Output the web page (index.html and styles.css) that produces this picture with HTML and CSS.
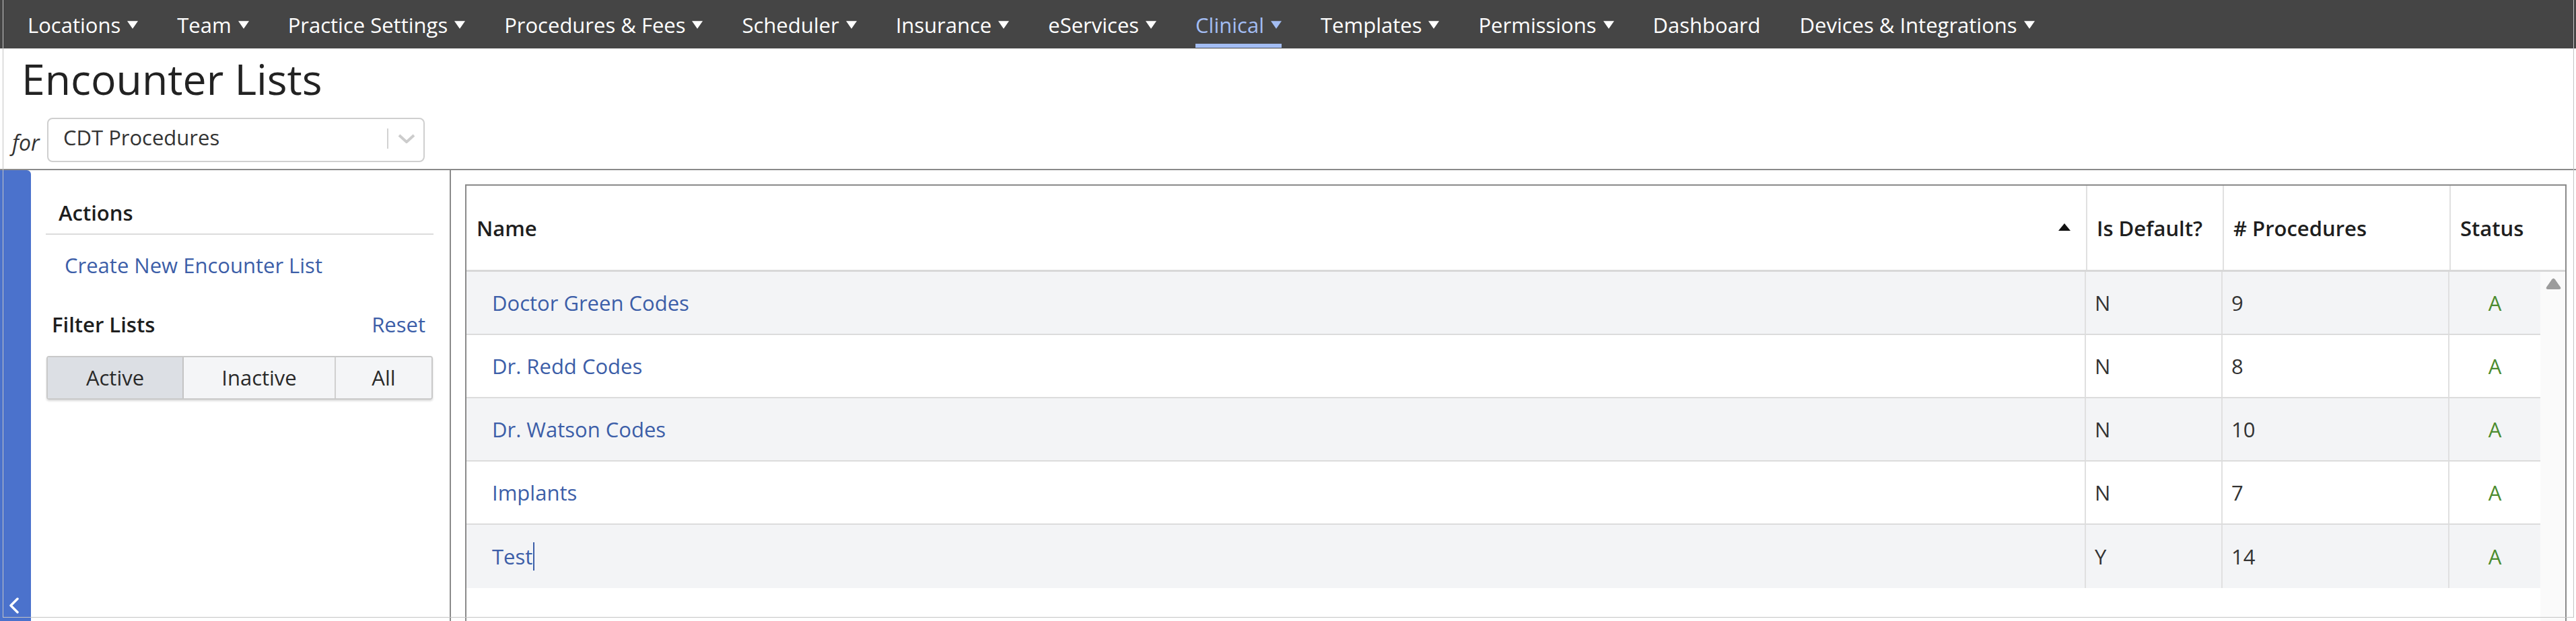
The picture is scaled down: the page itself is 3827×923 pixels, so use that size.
FILE: index.html
```html
<!DOCTYPE html>
<html lang="en">
<head>
    <meta charset="UTF-8">
    <meta name="viewport" content="width=device-width, initial-scale=1.0">
    <title>Encounter Lists</title>
    <link rel="stylesheet" href="styles.css">
</head>
<body>
    <div class="frame"></div>

    <nav class="topnav">
        <a class="nav-item">Locations <svg class="caret" viewBox="0 0 15 11"><polygon points="0,0 15,0 7.5,11"/></svg></a>
        <a class="nav-item">Team <svg class="caret" viewBox="0 0 15 11"><polygon points="0,0 15,0 7.5,11"/></svg></a>
        <a class="nav-item">Practice Settings <svg class="caret" viewBox="0 0 15 11"><polygon points="0,0 15,0 7.5,11"/></svg></a>
        <a class="nav-item">Procedures &amp; Fees <svg class="caret" viewBox="0 0 15 11"><polygon points="0,0 15,0 7.5,11"/></svg></a>
        <a class="nav-item">Scheduler <svg class="caret" viewBox="0 0 15 11"><polygon points="0,0 15,0 7.5,11"/></svg></a>
        <a class="nav-item">Insurance <svg class="caret" viewBox="0 0 15 11"><polygon points="0,0 15,0 7.5,11"/></svg></a>
        <a class="nav-item">eServices <svg class="caret" viewBox="0 0 15 11"><polygon points="0,0 15,0 7.5,11"/></svg></a>
        <a class="nav-item active">Clinical <svg class="caret" viewBox="0 0 15 11"><polygon points="0,0 15,0 7.5,11"/></svg></a>
        <a class="nav-item">Templates <svg class="caret" viewBox="0 0 15 11"><polygon points="0,0 15,0 7.5,11"/></svg></a>
        <a class="nav-item">Permissions <svg class="caret" viewBox="0 0 15 11"><polygon points="0,0 15,0 7.5,11"/></svg></a>
        <a class="nav-item">Dashboard</a>
        <a class="nav-item">Devices &amp; Integrations <svg class="caret" viewBox="0 0 15 11"><polygon points="0,0 15,0 7.5,11"/></svg></a>
    </nav>

    <header class="page-head">
        <h1>Encounter Lists</h1>
        <div class="for-row">
            <span class="for-label">for</span>
            <div class="select">
                <span class="select-value">CDT Procedures</span>
                <span class="select-sep"></span>
                <svg class="select-chevron" viewBox="0 0 26 14"><polyline points="2,2 13,12 24,2"/></svg>
            </div>
        </div>
    </header>

    <main class="workspace">
        <aside class="rail">
            <svg class="rail-toggle" viewBox="0 0 16 24"><polyline points="13,2 3,12 13,22"/></svg>
        </aside>

        <section class="side-panel">
            <div class="panel-title">Actions</div>
            <a class="panel-link">Create New Encounter List</a>

            <div class="filter-head">
                <span class="filter-title">Filter Lists</span>
                <a class="reset">Reset</a>
            </div>
            <div class="btn-group">
                <span class="btn btn-active">Active</span>
                <span class="btn btn-inactive">Inactive</span>
                <span class="btn btn-all">All</span>
            </div>
        </section>

        <section class="list-area">
            <div class="grid">
                <div class="grid-head">
                    <div class="hcell hcell-name">
                        <span>Name</span>
                        <svg class="sort-up" viewBox="0 0 18 11"><polygon points="9,0 18,11 0,11"/></svg>
                    </div>
                    <div class="hcell">Is Default?</div>
                    <div class="hcell"># Procedures</div>
                    <div class="hcell">Status</div>
                </div>
                <div class="grid-body">
                    <div class="rows">
                        <div class="row">
                            <div class="cell cell-name"><a>Doctor Green Codes</a></div>
                            <div class="cell">N</div>
                            <div class="cell">9</div>
                            <div class="cell cell-status">A</div>
                        </div>
                        <div class="row">
                            <div class="cell cell-name"><a>Dr. Redd Codes</a></div>
                            <div class="cell">N</div>
                            <div class="cell">8</div>
                            <div class="cell cell-status">A</div>
                        </div>
                        <div class="row">
                            <div class="cell cell-name"><a>Dr. Watson Codes</a></div>
                            <div class="cell">N</div>
                            <div class="cell">10</div>
                            <div class="cell cell-status">A</div>
                        </div>
                        <div class="row">
                            <div class="cell cell-name"><a>Implants</a></div>
                            <div class="cell">N</div>
                            <div class="cell">7</div>
                            <div class="cell cell-status">A</div>
                        </div>
                        <div class="row">
                            <div class="cell cell-name"><a>Test</a><span class="text-caret"></span></div>
                            <div class="cell">Y</div>
                            <div class="cell">14</div>
                            <div class="cell cell-status">A</div>
                        </div>
                    </div>
                    <div class="scrollbar">
                        <svg class="scroll-up" viewBox="0 0 23 17"><path d="M9.2 2.2 Q11.5 -0.8 13.8 2.2 L22 14 Q23 17 20 17 L3 17 Q0 17 1 14 Z"/></svg>
                    </div>
                </div>
            </div>
        </section>
    </main>
</body>
</html>
```

FILE: styles.css
```css
html, body { margin: 0; padding: 0; }
body {
    font-family: "Open Sans", "Liberation Sans", sans-serif;
    font-size: 31px;
    color: #333;
    background: #fff;
    width: 3827px;
    height: 923px;
    overflow: hidden;
    display: flex;
    flex-direction: column;
}
a { color: #3c5ea8; text-decoration: none; }

/* thin window outline drawn over everything */
.frame {
    position: fixed;
    left: 4px;
    top: -2px;
    width: 3820px;
    height: 920px;
    box-sizing: border-box;
    border: 1.5px solid #c4c4c4;
    pointer-events: none;
    z-index: 10;
}

/* top navigation */
.topnav {
    height: 72px;
    flex: none;
    background: #454545;
    display: flex;
    align-items: center;
    gap: 58px;
    padding: 2px 0 0 41px;
    box-sizing: border-box;
}
.nav-item {
    position: relative;
    color: #fff;
    font-size: 31px;
    line-height: 42px;
    display: flex;
    align-items: center;
    white-space: nowrap;
}
.caret { width: 16px; height: 12px; margin-left: 10px; fill: currentColor; }
.nav-item.active { color: #a3bdf3; }
.nav-item.active::after {
    content: "";
    position: absolute;
    left: 0;
    right: 0;
    bottom: -13px;
    height: 6px;
    background: #a3bdf3;
}

/* page heading */
.page-head {
    flex: none;
    padding: 3px 0 10px 0;
    border-bottom: 2px solid #8a8a8a;
}
h1 {
    margin: 0;
    padding-left: 32px;
    font-size: 62.5px;
    font-weight: 400;
    line-height: 84px;
    color: #222;
}
.for-row {
    display: flex;
    align-items: center;
    margin-top: 16px;
    padding-left: 18px;
}
.for-label { font-style: italic; font-size: 32px; color: #333; width: 52px; padding-top: 6px; }
.select {
    width: 561px;
    height: 66px;
    box-sizing: border-box;
    border: 2px solid #cfcfcf;
    border-radius: 8px;
    display: flex;
    align-items: center;
    padding: 0 12px 0 22px;
}
.select-value { flex: 1; color: #333; padding-bottom: 8px; }
.select-sep { width: 2px; height: 30px; background: #d2d2d2; margin-bottom: 4px; }
.select-chevron {
    width: 26px; height: 14px; margin-left: 14px; margin-bottom: 4px;
    fill: none; stroke: #cccccc; stroke-width: 4;
}

/* main workspace */
.workspace { flex: 1; display: flex; min-height: 0; }
.rail {
    width: 46px;
    flex: none;
    background: #4b72cc;
    border-top-right-radius: 6px;
    display: flex;
    align-items: flex-end;
}
.rail-toggle {
    width: 16px; height: 24px; margin: 0 0 11px 13px;
    fill: none; stroke: #fff; stroke-width: 3.5; stroke-linecap: round; stroke-linejoin: round;
}

.side-panel {
    width: 624px;
    flex: none;
    box-sizing: border-box;
    padding: 0 24px 0 22px;
    border-right: 2px solid #8a8a8a;
    display: flex;
    flex-direction: column;
}
.panel-title {
    margin-top: 42px;
    padding: 0 0 10px 19px;
    font-weight: 600;
    color: #1e1e1e;
    line-height: 42px;
    border-bottom: 2px solid #dcdcdc;
}
.panel-link { margin-top: 24px; padding-left: 28px; line-height: 42px; }
.filter-head {
    margin-top: 46px;
    display: flex;
    justify-content: space-between;
    padding: 0 12px 0 9px;
    line-height: 42px;
}
.filter-title { font-weight: 600; color: #1e1e1e; }
.btn-group {
    margin: 26px 1px 0 1px;
    height: 65px;
    display: flex;
    border: 2px solid #c9c9c9;
    border-radius: 4px;
    box-shadow: 0 2px 3px rgba(0,0,0,0.15);
    box-sizing: border-box;
    overflow: hidden;
}
.btn {
    display: flex;
    align-items: center;
    justify-content: center;
    background: #f4f5f7;
    color: #2a2a2a;
    padding-bottom: 2px;
}
.btn-active { width: 200px; background: #dcdfe4; border-right: 2px solid #c4c4c4; }
.btn-inactive { width: 224px; border-right: 2px solid #d0d0d0; }
.btn-all { flex: 1; }

/* encounter list grid */
.list-area {
    flex: 1;
    padding: 21px 14px 0 21px;
    display: flex;
    min-width: 0;
}
.grid {
    flex: 1;
    border: 2px solid #8a8a8a;
    border-bottom: none;
    display: flex;
    flex-direction: column;
}
.grid-head {
    height: 125px;
    flex: none;
    display: grid;
    grid-template-columns: 1fr 203px 337px 172px;
    border-bottom: 3px solid #d8d8d8;
}
.hcell {
    display: flex;
    align-items: center;
    padding-left: 14px;
    font-weight: 600;
    color: #1e1e1e;
    border-left: 2px solid #e0e0e0;
}
.hcell-name { border-left: none; padding: 0 23px 0 15px; justify-content: space-between; }
.sort-up { width: 18px; height: 11px; fill: #111; margin-top: -2px; }

.grid-body { flex: 1; display: flex; }
.rows { flex: 1; }
.row {
    height: 92px;
    display: grid;
    grid-template-columns: 2404px 203px 337px 1fr;
    border-bottom: 2px solid #dcdcdc;
}
.row:nth-child(odd) { background: #f3f4f6; }
.row:last-child { border-bottom: none; height: 94px; }
.cell {
    display: flex;
    align-items: center;
    padding-left: 13px;
    border-left: 2px solid #e0e0e0;
    color: #333;
}
.cell-name { border-left: none; padding-left: 38px; }
.cell-status { justify-content: center; padding-left: 0; color: #4c8c2f; }
.text-caret { width: 2px; height: 42px; background: #3c5ea8; margin-left: 1px; }

.scrollbar { width: 37px; flex: none; background: #fafafa; }
.scroll-up { display: block; width: 23px; height: 17px; margin: 9px 0 0 8px; fill: #9c9c9c; }
```
